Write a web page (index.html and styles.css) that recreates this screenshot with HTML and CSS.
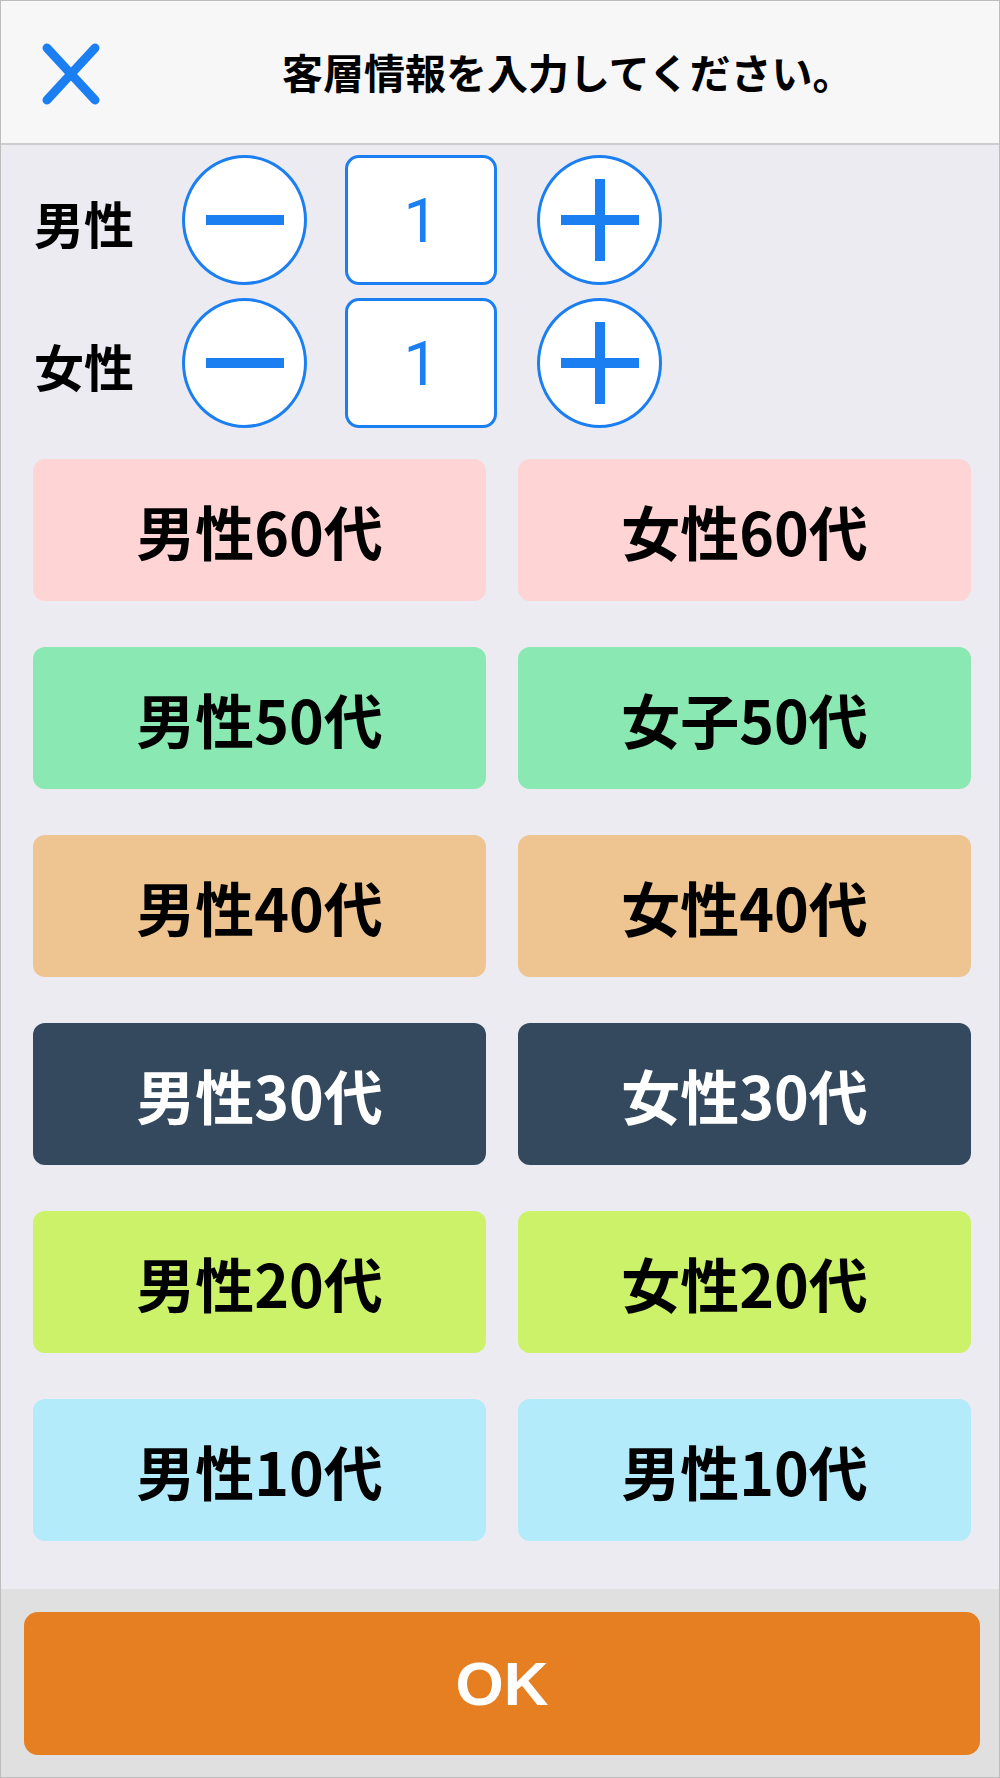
FILE: index.html
```html
<!DOCTYPE html>
<html>
<head>
    <meta charset="utf-8">
    <link rel="stylesheet" href="styles.css">
</head>
<body>
    <div class="screen">
        <div class="header">
            <svg class="close-icon" width="58" height="62" viewBox="0 0 58 62">
                <path d="M5 5L53 57M53 5L5 57" stroke="#1b7ff2" stroke-width="9" stroke-linecap="round" fill="none"/>
            </svg>
            <div class="title">客層情報を入力してください。</div>
        </div>

        <div class="main">
            <div class="stepper">
                <div class="stepper-label">男性</div>
                <div class="round-btn">
                    <svg width="80" height="80" viewBox="0 0 80 80"><path d="M1 40H79" stroke="#1b7ff2" stroke-width="10"/></svg>
                </div>
                <div class="count">1</div>
                <div class="round-btn">
                    <svg width="80" height="84" viewBox="0 0 80 84"><path d="M1 42H79M40 1V83" stroke="#1b7ff2" stroke-width="10"/></svg>
                </div>
            </div>
            <div class="stepper">
                <div class="stepper-label">女性</div>
                <div class="round-btn">
                    <svg width="80" height="80" viewBox="0 0 80 80"><path d="M1 40H79" stroke="#1b7ff2" stroke-width="10"/></svg>
                </div>
                <div class="count">1</div>
                <div class="round-btn">
                    <svg width="80" height="84" viewBox="0 0 80 84"><path d="M1 42H79M40 1V83" stroke="#1b7ff2" stroke-width="10"/></svg>
                </div>
            </div>

            <div class="age-grid">
                <div class="age-btn age-60">男性60代</div>
                <div class="age-btn age-60">女性60代</div>
                <div class="age-btn age-50">男性50代</div>
                <div class="age-btn age-50">女子50代</div>
                <div class="age-btn age-40">男性40代</div>
                <div class="age-btn age-40">女性40代</div>
                <div class="age-btn age-30">男性30代</div>
                <div class="age-btn age-30">女性30代</div>
                <div class="age-btn age-20">男性20代</div>
                <div class="age-btn age-20">女性20代</div>
                <div class="age-btn age-10">男性10代</div>
                <div class="age-btn age-10">男性10代</div>
            </div>
        </div>

        <div class="footer">
            <div class="ok-btn">OK</div>
        </div>
    </div>
</body>
</html>
```

FILE: styles.css
```css
body {
    margin: 0;
    font-family: "Noto Sans CJK JP", "Noto Sans", sans-serif;
    color: #000;
}
.screen {
    box-sizing: border-box;
    width: 1000px;
    height: 1778px;
    border: 1px solid #bdbdbd;
    display: flex;
    flex-direction: column;
    background-color: #ebebf1;
}
.header {
    box-sizing: border-box;
    height: 144px;
    flex-shrink: 0;
    background-color: #f7f7f7;
    border-bottom: 2px solid #cdcdcf;
    display: flex;
    align-items: center;
    padding-left: 41px;
    padding-top: 4px;
}
.close-icon {
    display: block;
}
.title {
    margin-left: 182px;
    font-size: 41px;
    font-weight: 700;
    margin-top: -6px;
}
.main {
    flex: 1;
    padding-top: 10px;
}
.stepper {
    display: flex;
    align-items: center;
    height: 130px;
    padding-left: 33px;
    margin-bottom: 13px;
}
.stepper-label {
    width: 148px;
    font-size: 50px;
    font-weight: 700;
    margin-top: 4px;
}
.round-btn {
    box-sizing: border-box;
    width: 125px;
    height: 130px;
    border: 3px solid #1b7ff2;
    border-radius: 50%;
    background-color: #fff;
    display: flex;
    align-items: center;
    justify-content: center;
}
.count {
    box-sizing: border-box;
    width: 152px;
    height: 130px;
    margin: 0 40px 0 38px;
    border: 3px solid #1b7ff2;
    border-radius: 14px;
    background-color: #fff;
    display: flex;
    align-items: center;
    justify-content: center;
    font-family: Roboto, "Noto Sans", sans-serif;
    font-weight: 400;
    font-size: 62px;
    color: #1b7ff2;
}
.age-grid {
    display: grid;
    grid-template-columns: 453px 453px;
    column-gap: 32px;
    row-gap: 46px;
    padding: 0 28px 0 32px;
    margin-top: 31px;
}
.age-btn {
    height: 142px;
    border-radius: 12px;
    display: flex;
    align-items: center;
    justify-content: center;
    font-size: 59px;
    font-weight: 700;
}
.age-60 { background-color: #ffd4d4; }
.age-50 { background-color: #8ae8b2; }
.age-40 { background-color: #eec591; }
.age-30 { background-color: #34495e; color: #fff; }
.age-20 { background-color: #ccf26a; }
.age-10 { background-color: #b4ebfa; }
.footer {
    box-sizing: border-box;
    height: 188px;
    flex-shrink: 0;
    background-color: #e0e0e0;
    padding: 23px 19px 0 23px;
}
.ok-btn {
    height: 143px;
    border-radius: 14px;
    background-color: #e67e22;
    color: #fff;
    display: flex;
    align-items: center;
    justify-content: center;
    font-family: "Liberation Sans", sans-serif;
    font-size: 62px;
    font-weight: 700;
}
```
